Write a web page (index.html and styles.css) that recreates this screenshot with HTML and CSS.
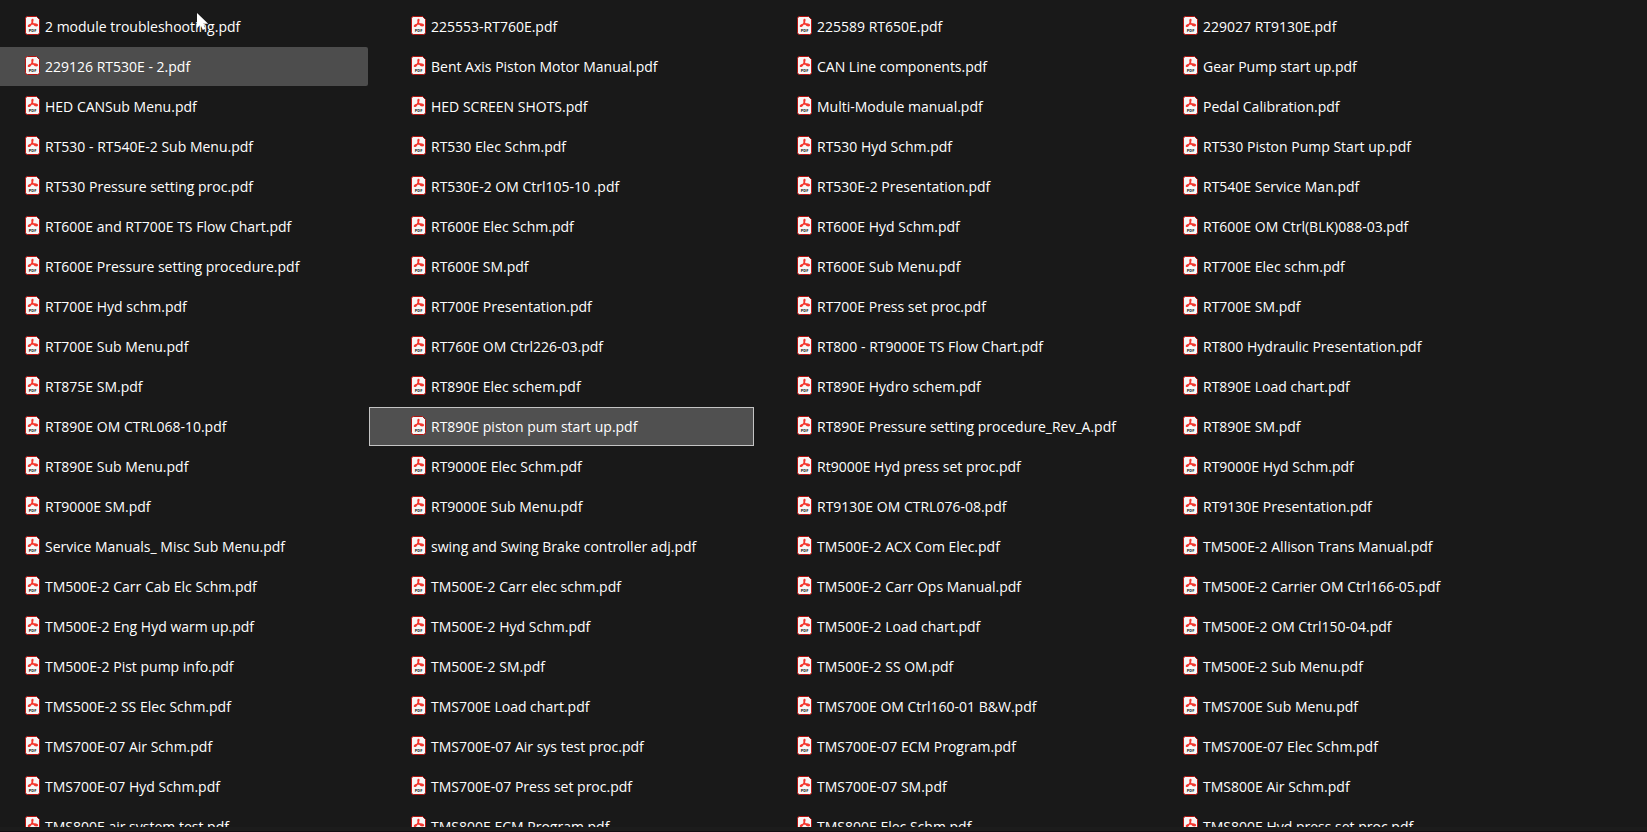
FILE: index.html
```html
<!DOCTYPE html>
<html lang="en">
<head>
  <meta charset="UTF-8">
  <title>Service Manuals</title>
  <link rel="stylesheet" href="styles.css">
</head>
<body>

<!-- Shared icon -->
<svg class="sprite" aria-hidden="true">
  <symbol id="pdf" viewBox="0 0 15 19">
    <path d="M2.5 .5h9l3 3v13a2 2 0 0 1-2 2h-10a2 2 0 0 1-2-2v-14a2 2 0 0 1 2-2z" fill="#f8f6f6" stroke="#b5120f"/>
    <path d="M7.500 3.500c-1 .2-.6 2.200 .3 3.700 1 1.500 2.900 2.800 4.200 2.400 1.100-.5-.2-1.900-2.900-1.700-2.500 .1-5.300 .9-5.700 2-.1 1 1.500 .4 2.500-1.300 1.200-1.800 2.700-5 1.600-5.100z" fill="none" stroke="#f5352d" stroke-width="1.400"/>
    <text x="7.500" y="16" text-anchor="middle" class="pdf-label">PDF</text>
  </symbol>
</svg>

<main class="files" id="files"></main>
<div class="bottom-edge"></div>

<svg class="cursor" viewBox="0 0 12 18" aria-hidden="true">
  <path d="M0 0v15l3.500-3.200 2.300 5.200 2.600-1.200-2.200-5h5z" fill="#fff"/>
</svg>

<script>
  const names = [
    "2 module troubleshooting.pdf", "225553-RT760E.pdf", "225589 RT650E.pdf", "229027 RT9130E.pdf",
    "229126 RT530E - 2.pdf", "Bent Axis Piston Motor Manual.pdf", "CAN Line components.pdf", "Gear Pump start up.pdf",
    "HED CANSub Menu.pdf", "HED SCREEN SHOTS.pdf", "Multi-Module manual.pdf", "Pedal Calibration.pdf",
    "RT530 - RT540E-2 Sub Menu.pdf", "RT530 Elec Schm.pdf", "RT530 Hyd Schm.pdf", "RT530 Piston Pump Start up.pdf",
    "RT530 Pressure setting proc.pdf", "RT530E-2 OM Ctrl105-10 .pdf", "RT530E-2 Presentation.pdf", "RT540E Service Man.pdf",
    "RT600E and RT700E TS Flow Chart.pdf", "RT600E Elec Schm.pdf", "RT600E Hyd Schm.pdf", "RT600E OM Ctrl(BLK)088-03.pdf",
    "RT600E Pressure setting procedure.pdf", "RT600E SM.pdf", "RT600E Sub Menu.pdf", "RT700E Elec schm.pdf",
    "RT700E Hyd schm.pdf", "RT700E Presentation.pdf", "RT700E Press set proc.pdf", "RT700E SM.pdf",
    "RT700E Sub Menu.pdf", "RT760E OM Ctrl226-03.pdf", "RT800 - RT9000E TS Flow Chart.pdf", "RT800 Hydraulic Presentation.pdf",
    "RT875E SM.pdf", "RT890E Elec schem.pdf", "RT890E Hydro schem.pdf", "RT890E Load chart.pdf",
    "RT890E OM CTRL068-10.pdf", "RT890E piston pum start up.pdf", "RT890E Pressure setting procedure_Rev_A.pdf", "RT890E SM.pdf",
    "RT890E Sub Menu.pdf", "RT9000E Elec Schm.pdf", "Rt9000E Hyd press set proc.pdf", "RT9000E Hyd Schm.pdf",
    "RT9000E SM.pdf", "RT9000E Sub Menu.pdf", "RT9130E OM CTRL076-08.pdf", "RT9130E Presentation.pdf",
    "Service Manuals_ Misc Sub Menu.pdf", "swing and Swing Brake controller adj.pdf", "TM500E-2 ACX Com Elec.pdf", "TM500E-2 Allison Trans Manual.pdf",
    "TM500E-2 Carr Cab Elc Schm.pdf", "TM500E-2 Carr elec schm.pdf", "TM500E-2 Carr Ops Manual.pdf", "TM500E-2 Carrier OM Ctrl166-05.pdf",
    "TM500E-2 Eng Hyd warm up.pdf", "TM500E-2 Hyd Schm.pdf", "TM500E-2 Load chart.pdf", "TM500E-2 OM Ctrl150-04.pdf",
    "TM500E-2 Pist pump info.pdf", "TM500E-2 SM.pdf", "TM500E-2 SS OM.pdf", "TM500E-2 Sub Menu.pdf",
    "TMS500E-2 SS Elec Schm.pdf", "TMS700E Load chart.pdf", "TMS700E OM Ctrl160-01 B&W.pdf", "TMS700E Sub Menu.pdf",
    "TMS700E-07 Air Schm.pdf", "TMS700E-07 Air sys test proc.pdf", "TMS700E-07 ECM Program.pdf", "TMS700E-07 Elec Schm.pdf",
    "TMS700E-07 Hyd Schm.pdf", "TMS700E-07 Press set proc.pdf", "TMS700E-07 SM.pdf", "TMS800E Air Schm.pdf",
    "TMS800E air system test.pdf", "TMS800E ECM Program.pdf", "TMS800E Elec Schm.pdf", "TMS800E Hyd press set proc.pdf"
  ];
  const hovered = "229126 RT530E - 2.pdf";
  const selected = "RT890E piston pum start up.pdf";

  const files = document.getElementById('files');

  names.forEach(name => {
    const link = document.createElement('a');
    link.className = 'file';
    if (name === hovered) link.classList.add('hovered');
    if (name === selected) link.classList.add('selected');
    link.href = encodeURIComponent(name);
    link.innerHTML = '<svg class="file-icon" aria-hidden="true"><use href="#pdf"></use></svg><span class="file-name"></span>';
    link.querySelector('.file-name').textContent = name;
    files.appendChild(link);
  });
</script>

</body>
</html>
```

FILE: styles.css
```css
* {
  box-sizing: border-box;
}

body {
  margin: 0;
  height: 100vh;
  display: flex;
  flex-direction: column;
  overflow: hidden;
  background-color: #191919;
  color: #fff;
  font-family: "Segoe UI", "Open Sans", sans-serif;
  font-size: 14px;
}

.sprite {
  display: none;
}

/* the list is scrolled a little past its left edge */
.files {
  flex: 1;
  min-height: 0;
  overflow: hidden;
  margin-left: -17px;
  padding-top: 7px;
  display: grid;
  grid-template-columns: repeat(auto-fill, 385px);
  grid-auto-rows: 39px;
  gap: 1px;
}

.file {
  display: flex;
  align-items: center;
  gap: 5px;
  padding: 0 0 2px 41px;
  border: 1px solid transparent;
  border-radius: 2px;
  color: #fff;
  text-decoration: none;
  white-space: nowrap;
}

.file:hover,
.file.hovered {
  background-color: #4d4d4d;
}

.file.selected {
  background-color: #505050;
  border-color: #c4c4c4;
  border-radius: 0;
}

.file-icon {
  width: 15px;
  height: 19px;
  flex: none;
}

.file-name {
  padding-top: 2px;
}

.pdf-label {
  font-size: 4px;
  font-weight: bold;
  fill: #111;
}

.bottom-edge {
  flex: none;
  height: 5px;
  background-color: #1c1c1c;
  border-bottom: 1px solid #120c12;
}

.cursor {
  position: absolute;
  left: 197px;
  top: 13px;
  width: 12px;
  height: 18px;
  pointer-events: none;
}
```
